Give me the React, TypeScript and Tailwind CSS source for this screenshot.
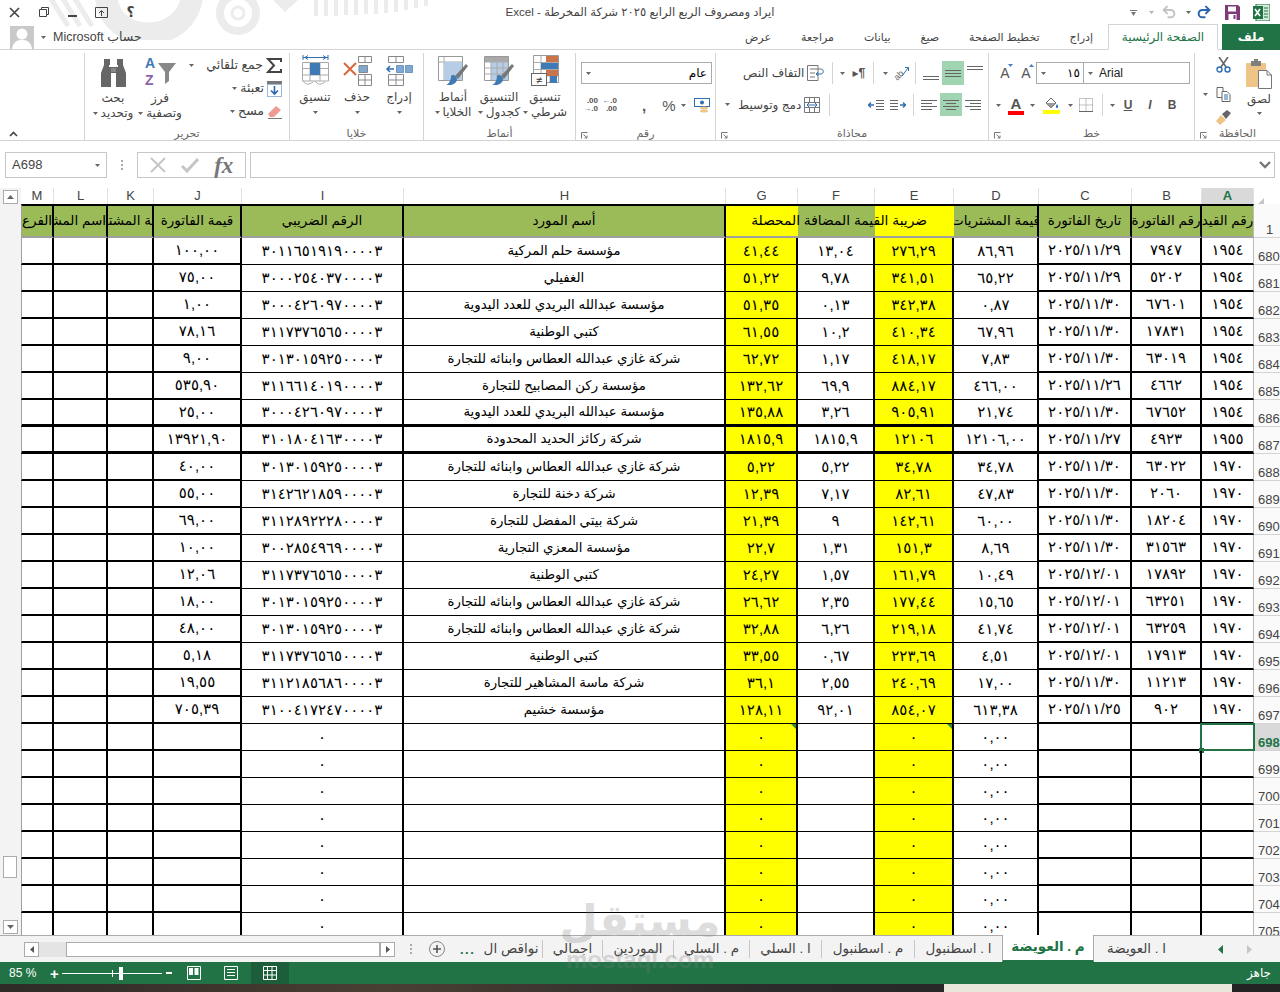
import { type ReactNode } from "react";
import { Redo2, Undo2 } from "lucide-react";

const ar = (s: string) => s.replace(/\d/g, (d) => "٠١٢٣٤٥٦٧٨٩"[Number(d)]);

const GAZI = "شركة غازي عبدالله العطاس وابنائه للتجارة";
const BARIDI = "مؤسسة عبدالله البريدي للعدد اليدوية";
const KUTBI = "كتبي الوطنية";

// A, B, C, D, E, F, G, supplier, tax number, J
const rows: [string, string, string, string, string, string, string, string, string, string][] = [
  ["1954", "7947", "2025/11/29", "86,96", "276,29", "13,04", "41,44", "مؤسسة حلم المركية", "301165191900003", "100,00"],
  ["1954", "5202", "2025/11/29", "65,22", "341,51", "9,78", "51,22", "الغفيلي", "300025403700003", "75,00"],
  ["1954", "67601", "2025/11/30", "0,87", "342,38", "0,13", "51,35", BARIDI, "300042609700003", "1,00"],
  ["1954", "17831", "2025/11/30", "67,96", "410,34", "10,2", "61,55", KUTBI, "311737656500003", "78,16"],
  ["1954", "63019", "2025/11/30", "7,83", "418,17", "1,17", "62,72", GAZI, "301301592500003", "9,00"],
  ["1954", "4662", "2025/11/26", "466,00", "884,17", "69,9", "132,62", "مؤسسة ركن المصابيح للتجارة", "311661401900003", "535,90"],
  ["1954", "67652", "2025/11/30", "21,74", "905,91", "3,26", "135,88", BARIDI, "300042609700003", "25,00"],
  ["1955", "4923", "2025/11/27", "12106,00", "12106", "1815,9", "1815,9", "شركة ركائز الحديد المحدودة", "310180416300003", "13921,90"],
  ["1970", "63022", "2025/11/30", "34,78", "34,78", "5,22", "5,22", GAZI, "301301592500003", "40,00"],
  ["1970", "2060", "2025/11/30", "47,83", "82,61", "7,17", "12,39", "شركة دخنة للتجارة", "314262185900003", "55,00"],
  ["1970", "18204", "2025/11/30", "60,00", "142,61", "9", "21,39", "شركة بيتي المفضل للتجارة", "311289222800003", "69,00"],
  ["1970", "31563", "2025/11/30", "8,69", "151,3", "1,31", "22,7", "مؤسسة المعزي التجارية", "300285496900003", "10,00"],
  ["1970", "17892", "2025/12/01", "10,49", "161,79", "1,57", "24,27", KUTBI, "311737656500003", "12,06"],
  ["1970", "63251", "2025/12/01", "15,65", "177,44", "2,35", "26,62", GAZI, "301301592500003", "18,00"],
  ["1970", "63259", "2025/12/01", "41,74", "219,18", "6,26", "32,88", GAZI, "301301592500003", "48,00"],
  ["1970", "17913", "2025/12/01", "4,51", "223,69", "0,67", "33,55", KUTBI, "311737656500003", "5,18"],
  ["1970", "11213", "2025/11/30", "17,00", "240,69", "2,55", "36,1", "شركة ماسة المشاهير للتجارة", "311218568600003", "19,55"],
  ["1970", "902", "2025/11/25", "613,38", "854,07", "92,01", "128,11", "مؤسسة خشيم", "310041724700003", "705,39"],
];

const GRID = "grid grid-cols-[33px_54px_46px_88px_162px_322px_72px_77px_79px_85px_93px_70px_52px_26px]";
const LETTERS = ["M", "L", "K", "J", "I", "H", "G", "F", "E", "D", "C", "B", "A"];

function Caret({ className = "" }: { className?: string }) {
  return (
    <svg width="5" height="3" viewBox="0 0 5 3" className={`shrink-0 ${className}`}>
      <path d="M0 0h5L2.5 3z" fill="#666" />
    </svg>
  );
}

function Launcher() {
  return (
    <svg width="7" height="7" viewBox="0 0 7 7" className="shrink-0">
      <path d="M0.5 6.5V0.5H6.5M2.5 2.5L6 6M3.5 6H6V3.5" fill="none" stroke="#777" />
    </svg>
  );
}

function Sep({ h = "h-[22px]", className = "" }: { h?: string; className?: string }) {
  return <div className={`w-px shrink-0 bg-[#d4d4d4] ${h} ${className}`} />;
}

function Group({ w, label, launcher, children }: { w: string; label: string; launcher?: boolean; children: ReactNode }) {
  return (
    <div className={`flex h-full shrink-0 flex-col border-l border-[#d4d4d4] ${w}`}>
      <div className="min-h-0 flex-1">{children}</div>
      <div className="flex h-[17px] items-end pb-[1px] pl-[5px] pr-[5px] text-[11px] leading-none text-[#666]">
        {launcher ? <Launcher /> : <span className="w-[7px]" />}
        <span dir="rtl" className="flex-1 text-center">{label}</span>
        <span className="w-[7px]" />
      </div>
    </div>
  );
}

function LargeBtn({ w, icon, lines, caret }: { w: string; icon: ReactNode; lines: string[]; caret: "inline" | "below" | "none" }) {
  return (
    <div className={`flex shrink-0 flex-col items-center ${w}`}>
      <div className="flex h-[35px] items-end justify-center pb-[2px]">{icon}</div>
      <div dir="rtl" className="mt-[2px] whitespace-nowrap text-center text-[12px] leading-[15px] text-[#444]">{lines[0]}</div>
      {caret === "below" && <Caret className="mt-[6px]" />}
      {caret !== "below" && lines[1] && (
        <div className="flex items-center gap-[3px] whitespace-nowrap text-[12px] leading-[15px] text-[#444]">
          {caret === "inline" && <Caret />}
          <span dir="rtl">{lines[1]}</span>
        </div>
      )}
    </div>
  );
}

function Paste() {
  return (
    <svg width="28" height="30" viewBox="0 0 28 30">
      <rect x="1" y="4" width="20" height="24" rx="1" fill="#eec586" />
      <rect x="6" y="2" width="10" height="5" fill="#7f7f7f" />
      <rect x="9" y="0" width="4" height="3" fill="#7f7f7f" />
      <path d="M13.5 11.5H22L26.5 16V29.5H13.5Z" fill="#fff" stroke="#777" />
      <path d="M22 11.5V16H26.5" fill="none" stroke="#777" />
    </svg>
  );
}

function ScissorsIcon() {
  return (
    <svg width="15" height="16" viewBox="0 0 15 16" fill="none">
      <path d="M3 0L10 10M12 0L5 10" stroke="#666" strokeWidth="1.6" />
      <circle cx="3.5" cy="12.5" r="2.5" stroke="#2f6fb1" strokeWidth="1.4" />
      <circle cx="11.5" cy="12.5" r="2.5" stroke="#2f6fb1" strokeWidth="1.4" />
    </svg>
  );
}

function CopyIcon() {
  return (
    <svg width="15" height="15" viewBox="0 0 15 15" fill="none">
      <path d="M1 0.5H7V10.5H1Z" fill="#fff" stroke="#666" />
      <path d="M6 4.5H11L14 7.5V14.5H6Z" fill="#fff" stroke="#666" />
      <path d="M8 8h4M8 10h4M8 12h4" stroke="#2f6fb1" />
    </svg>
  );
}

function BrushIcon() {
  return (
    <svg width="15" height="15" viewBox="0 0 15 15">
      <path d="M0 11L5 5L10 10L4 15Z" fill="#eec586" />
      <path d="M6 4L11 0L15 3L10 9Z" fill="#666" />
    </svg>
  );
}

function FontGrow({ up }: { up: boolean }) {
  return (
    <span className="relative flex w-[12px] justify-center text-[14px] leading-none text-[#555]">
      A
      <svg width="5" height="3" viewBox="0 0 5 3" className="absolute right-[-2px] top-[-2px]">
        <path d={up ? "M0 3h5L2.5 0z" : "M0 0h5L2.5 3z"} fill="#4a7ebb" />
      </svg>
    </span>
  );
}

function Lines({ ys, active }: { ys: number[]; active?: boolean }) {
  return (
    <div className={`flex h-[24px] w-[22px] shrink-0 items-center justify-center ${active ? "bg-[#a1d5b2]" : ""}`}>
      <svg width="16" height="16" viewBox="0 0 16 16">
        {ys.map((y) => (
          <path key={y} d={`M0 ${y}H16`} stroke="#666" />
        ))}
      </svg>
    </div>
  );
}

function AlignH({ kind, active }: { kind: "r" | "c" | "l"; active?: boolean }) {
  const from = kind === "l" ? 0 : kind === "c" ? 3 : 5;
  const to = kind === "l" ? 11 : kind === "c" ? 13 : 16;
  const seg = [
    [0, 16],
    [from, to],
    [0, 16],
    [from, to],
  ];
  return (
    <div className={`flex h-[23px] w-[22px] shrink-0 items-center justify-center ${active ? "bg-[#a1d5b2]" : ""}`}>
      <svg width="16" height="14" viewBox="0 0 16 14">
        {seg.map(([a, b], i) => (
          <path key={i} d={`M${a} ${2.5 + i * 3}H${b}`} stroke="#666" />
        ))}
      </svg>
    </div>
  );
}

function Indent({ flip }: { flip?: boolean }) {
  return (
    <svg width="16" height="12" viewBox="0 0 16 12" className={flip ? "-scale-x-100" : ""}>
      <path d="M8 1.5h8M8 4.5h8M8 7.5h8M8 10.5h8" stroke="#666" />
      <path d="M0 6h6M3 3.5L0.5 6L3 8.5" fill="none" stroke="#2f6fb1" strokeWidth="1.4" />
    </svg>
  );
}

function WrapIcon() {
  return (
    <svg width="17" height="16" viewBox="0 0 17 16" fill="none">
      <path d="M0.5 0.5H11V15.5H0.5Z" stroke="#777" />
      <path d="M3 4h11M3 8h5M3 12h5" stroke="#777" />
      <path d="M14 4c3 0 3 5 0 5H9M11 7l-2 2 2 2" stroke="#2f6fb1" />
    </svg>
  );
}

function MergeIcon() {
  return (
    <svg width="16" height="16" viewBox="0 0 16 16" fill="none">
      <path d="M0.5 0.5H15.5V15.5H0.5ZM0.5 5.5H15.5M0.5 10.5H15.5M5.5 0.5V5.5M10.5 0.5V5.5M5.5 10.5V15.5M10.5 10.5V15.5" stroke="#777" />
      <path d="M3 8h10M5 6L3 8l2 2M11 6l2 2-2 2" stroke="#2f6fb1" />
    </svg>
  );
}

function TableGlyph({ kind }: { kind: "cond" | "table" | "cell" }) {
  if (kind === "cond") {
    return (
      <svg width="29" height="31" viewBox="0 0 29 31">
        <path d="M2.5 0.5H27.5V27.5H2.5Z" fill="#fff" stroke="#999" />
        <path d="M10 0.5V27M19 0.5V27M2.5 7.5H27.5M2.5 14.5H27.5M2.5 21H27.5" stroke="#aaa" />
        <rect x="15" y="1" width="12" height="6" fill="#c9744b" />
        <rect x="10" y="8" width="17" height="6" fill="#3e7ab5" />
        <rect x="15" y="15" width="12" height="6" fill="#c9744b" />
        <rect x="19" y="21" width="7" height="7" fill="#3e7ab5" />
        <rect x="0.5" y="18.5" width="15" height="12" fill="#fff" stroke="#666" />
        <text x="8" y="28.5" textAnchor="middle" fontSize="11" fill="#333">≠</text>
      </svg>
    );
  }
  return (
    <svg width="30" height="30" viewBox="0 0 30 30">
      <path d="M0.5 0.5H24.5V24.5H0.5Z" fill="#fff" stroke="#999" />
      {kind === "table" ? (
        <>
          <rect x="1" y="1" width="23" height="5" fill="#a9a9a9" />
          <rect x="7" y="6" width="17" height="18" fill="#b7cde6" />
          <path d="M7 1V24M13 1V24M19 1V24M1 6H24M1 12H24M1 18H24" stroke="#aaa" />
        </>
      ) : (
        <>
          <path d="M6 1V24M1 6H24" stroke="#aaa" />
          <rect x="6" y="6" width="18" height="18" fill="#b7cde6" />
        </>
      )}
      <path d="M17 20L28 8L30 10L20 23Z" fill="#777" />
      <path d="M13 22C12 17 19 19 19 24C17 30 10 29 8 29C11 28 12 25 13 22Z" fill="#3e7ab5" />
    </svg>
  );
}

function CellGlyph({ kind }: { kind: "insert" | "delete" | "format" }) {
  if (kind === "format") {
    return (
      <svg width="29" height="32" viewBox="0 0 29 32" fill="none">
        <path d="M2 3.5H27M2 1v5M27 1v5M4 3.5l3-2M4 3.5l3 2M25 3.5l-3-2M25 3.5l-3 2" stroke="#2f6fb1" />
        <path d="M1.5 8.5H27.5V27H1.5ZM1.5 14.5H27.5M1.5 21H27.5M9 8.5V27M19 8.5V27" stroke="#aaa" />
        <rect x="9" y="9" width="10" height="12" fill="#3e7ab5" />
        <path d="M2 27c3 4 6 4 10 1M14 27c3 4 6 4 10 1" stroke="#aaa" />
      </svg>
    );
  }
  const del = kind === "delete";
  return (
    <svg width="29" height="30" viewBox="0 0 29 30" fill="none">
      <path d={del ? "M15.5 0.5H28.5V6.5H15.5ZM22 0.5V6.5" : "M3.5 0.5H18.5V6.5H3.5ZM11 0.5V6.5"} stroke="#888" />
      <path d={del ? "M15.5 18.5H28.5V29.5H15.5ZM22 18.5V29.5M15.5 24H28.5" : "M3.5 18.5H18.5V29.5H3.5ZM11 18.5V29.5M3.5 24H18.5"} stroke="#888" />
      {del ? (
        <>
          <path d="M16 9.5H24.5V16.5H16Z" fill="#7fa9d3" stroke="#888" />
          <path d="M1 7l12 12M13 7L1 19" stroke="#d9663c" strokeWidth="2" />
        </>
      ) : (
        <>
          <path d="M11.5 9.5H18.5V16.5H11.5ZM20.5 9.5H27.5V16.5H20.5Z" fill="#7fa9d3" stroke="#6f96bd" />
          <path d="M2 13H9M5 10L2 13l3 3" stroke="#2f6fb1" strokeWidth="1.5" />
        </>
      )}
    </svg>
  );
}

function Cell({ children, className = "" }: { children?: ReactNode; className?: string }) {
  return (
    <div dir="rtl" className={`relative flex items-center justify-center overflow-hidden whitespace-nowrap text-black ${className}`}>
      {children}
    </div>
  );
}

function Tri() {
  return <span className="absolute right-0 top-0 h-0 w-0 border-l-[5px] border-t-[5px] border-l-transparent border-t-[#2f8b3d]" />;
}

function SheetRow({ n, data }: { n: number; data?: (typeof rows)[number] }) {
  const heavy = n === 686 || n === 687;
  const thick = heavy ? "border-b-[3px] border-black" : "border-b-2 border-black";
  const thin = heavy ? "border-b-[3px] border-black" : "border-b border-black";
  const side = "border-r-2 border-r-black";
  const num = "text-[15px]";
  const selected = n === 698;
  const d = data;
  return (
    <div className={`${GRID} h-[27px]`}>
      <Cell className={`${thick} ${side} border-l border-l-[#9f9f9f]`} />
      <Cell className={`${thick} ${side}`} />
      <Cell className={`${thick} ${side}`} />
      <Cell className={`${thick} ${side} ${num}`}>{d && ar(d[9])}</Cell>
      <Cell className={`${thin} ${side} ${num}`}>{d ? ar(d[8]) : "٠"}</Cell>
      <Cell className={`${thin} ${side} text-[13.3px]`}>{d && d[7]}</Cell>
      <Cell className={`${thin} ${side} ${num} bg-[#ffff00]`}>
        {d ? ar(d[6]) : "٠"}
        {selected && <Tri />}
      </Cell>
      <Cell className={`${thin} ${side} ${num}`}>{d && ar(d[5])}</Cell>
      <Cell className={`${thin} ${side} ${num} bg-[#ffff00]`}>
        {d ? ar(d[4]) : "٠"}
        {selected && <Tri />}
      </Cell>
      <Cell className={`${thin} ${side} ${num}`}>{d ? ar(d[3]) : "٠,٠٠"}</Cell>
      <Cell className={`${thick} ${side} ${num}`}>{d && ar(d[2])}</Cell>
      <Cell className={`${thick} ${side} ${num}`}>{d && ar(d[1])}</Cell>
      <div className={`relative flex items-center justify-center whitespace-nowrap text-black ${num} ${thick} border-r border-r-[#bbb]`} dir="rtl">
        {d && ar(d[0])}
        {selected && (
          <>
            <span className="absolute inset-x-[-2px] bottom-[-2px] top-[-1px] border-2 border-[#217346]" />
            <span className="absolute bottom-[-4px] left-[-3px] h-[5px] w-[5px] bg-[#217346]" />
          </>
        )}
      </div>
      <div className={`flex items-end overflow-hidden border-b border-[#d4d4d4] pl-[4px] text-[13px] leading-[14px] ${selected ? "bg-[#d9d9d9] font-bold text-[#217346]" : "bg-[#fafafa] text-[#444]"}`}>
        {n}
      </div>
    </div>
  );
}

function HeaderCell({ text, className = "", start }: { text?: string; className?: string; start?: boolean }) {
  return (
    <div dir="rtl" className={`flex min-w-0 items-center overflow-hidden whitespace-nowrap border-b-2 border-t-2 border-b-[#9f9f9f] border-t-black text-[13.5px] text-black ${start ? "justify-start" : "justify-center"} ${className}`}>
      {text}
    </div>
  );
}

const sheetTabs: [string, string][] = [
  ["ا . العويضة", "w-[85px]"],
  ["م . العويضة", "w-[92px]"],
  ["ا . اسطنبول", "w-[88px]"],
  ["م . اسطنبول", "w-[93px]"],
  ["ا . السلي", "w-[72px]"],
  ["م . السلي", "w-[76px]"],
  ["الموردين", "w-[71px]"],
  ["اجمالي", "w-[60px]"],
  ["نواقص ال", "w-[62px]"],
];

export default function App() {
  const blank = [698, 699, 700, 701, 702, 703, 704, 705];

  return (
    <div className="relative flex h-[992px] w-[1280px] flex-col overflow-hidden bg-white [font-family:'Liberation_Sans','DejaVu_Sans',sans-serif]">
      {/* office background pattern behind the title */}
      <svg width="470" height="40" viewBox="0 0 470 40" className="absolute left-0 top-0" fill="none">
        <g stroke="#ececec">
          <path d="M48 -6L68 26M60 -6L80 26M72 -6L92 26" strokeWidth="5" />
          <path d="M106 -4C110 46 186 46 192 -4" strokeWidth="22" />
          <circle cx="238" cy="13" r="18" strokeWidth="8" />
          <circle cx="238" cy="13" r="6" strokeWidth="3" />
          <path d="M316 0V16M326 0V16M336 0V16M346 0V15M356 0V15M366 0V14M376 0V14M386 0V13M396 0V12M406 0V10M416 0V8M426 0V6" strokeWidth="4" />
        </g>
        <path d="M273 0H298L285 12Z" fill="#ececec" />
      </svg>

      {/* title bar */}
      <div className="relative flex h-[24px] shrink-0 items-center">
        <div className="flex w-[180px] items-center text-[#444]">
          <span className="flex w-[29px] justify-center">
            <svg width="11" height="11" viewBox="0 0 11 11"><path d="M1 1l9 9M10 1l-9 9" stroke="#444" strokeWidth="1.6" /></svg>
          </span>
          <span className="flex w-[29px] justify-center">
            <svg width="10" height="10" viewBox="0 0 10 10" fill="none"><path d="M2.5 2.5V0.5H9.5V7.5H7.5M0.5 2.5H7.5V9.5H0.5Z" stroke="#444" /></svg>
          </span>
          <span className="flex w-[29px] justify-center">
            <span className="mt-[7px] h-[2px] w-[9px] bg-[#444]" />
          </span>
          <span className="flex w-[29px] justify-center">
            <svg width="13" height="11" viewBox="0 0 13 11" fill="none"><path d="M0.5 0.5H12.5V10.5H0.5ZM6.5 9V4M4 6l2.5-2.5L9 6" stroke="#444" /></svg>
          </span>
          <span className="flex w-[29px] justify-center text-[14px] font-bold leading-none">؟</span>
        </div>
        <div dir="rtl" className="flex-1 text-center text-[11.6px] text-[#444]">
          ايراد ومصروف الربع الرابع ٢٠٢٥ شركة المخرطة - Excel
        </div>
        <div className="flex w-[180px] items-center justify-end pr-[10px]">
          <svg width="7" height="7" viewBox="0 0 7 7" className="mr-[12px]"><path d="M1 3h5L3.5 7z" fill="#777" /><path d="M0 1.5h7" stroke="#777" /></svg>
          <Caret className="mr-[7px] opacity-50" />
          <Undo2 size={16} strokeWidth={3} color="#c4c4c4" className="mr-[9px]" />
          <Caret className="mr-[5px]" />
          <Redo2 size={16} strokeWidth={3} color="#2b66ad" className="mr-[13px]" />
          <svg width="15" height="15" viewBox="0 0 15 15" className="mr-[13px]">
            <path d="M0 0H13L15 2V15H0Z" fill="#80397b" />
            <rect x="3" y="1.5" width="8" height="5" fill="#fff" />
            <rect x="3.5" y="9" width="8" height="6" fill="#fff" />
            <rect x="8.5" y="10" width="2" height="4" fill="#80397b" />
          </svg>
          <svg width="17" height="17" viewBox="0 0 17 17">
            <rect x="3" y="0" width="14" height="17" fill="#d6e9dc" stroke="#217346" />
            <rect x="0" y="2" width="10" height="13" fill="#217346" />
            <path d="M2 5l5 7M7 5l-5 7" stroke="#fff" strokeWidth="1.6" />
            <path d="M11 4h4M11 7h4M11 10h4M11 13h4" stroke="#217346" />
          </svg>
        </div>
      </div>

      {/* tabs row */}
      <div className="relative flex h-[26px] shrink-0 items-end justify-between">
        <div className="flex h-full items-center pl-[10px]">
          <svg width="24" height="23" viewBox="0 0 24 23">
            <rect width="24" height="23" fill="#c9c9c9" />
            <circle cx="12" cy="8" r="5.5" fill="#fff" />
            <path d="M2 23C3 15 8 14 12 14C16 14 21 15 22 23Z" fill="#fff" />
          </svg>
          <Caret className="ml-[7px]" />
          <span dir="rtl" className="ml-[7px] text-[12.5px] text-[#444]">حساب Microsoft</span>
        </div>
        <div className="absolute inset-x-0 bottom-0 h-px bg-[#d4d4d4]" />
        <div dir="rtl" className="relative flex h-full items-stretch text-[11px] text-[#444]">
          <div className="flex w-[58px] items-center justify-center bg-[#217346] text-[12px] font-bold text-white">ملف</div>
          <div className="mr-[4px] flex w-[110px] items-center justify-center border border-[#d4d4d4] border-b-white text-[12px] text-[#217346]">الصفحة الرئيسية</div>
          {["إدراج", "تخطيط الصفحة", "صيغ", "بيانات", "مراجعة", "عرض"].map((t) => (
            <div key={t} className="flex items-center px-[15px]">{t}</div>
          ))}
        </div>
      </div>

      {/* ribbon */}
      <div className="flex h-[91px] shrink-0 border-b border-[#d4d4d4] pt-[3px]">
        <div className="flex h-full w-[84px] shrink-0 items-end pb-[3px] pl-[9px]">
          <svg width="9" height="6" viewBox="0 0 9 6" fill="none"><path d="M1 5l3.5-3.5L8 5" stroke="#444" strokeWidth="1.6" /></svg>
        </div>

        <Group w="w-[205px]" label="تحرير">
          <div className="flex pl-[6px] pt-[1px]">
            <LargeBtn w="w-[44px]" caret="inline" lines={["بحث", "وتحديد"]} icon={
              <svg width="27" height="28" viewBox="0 0 27 28">
                <path d="M4 0h6v6h-1v2h9V6h-1V0h6v6l3 8v14H16V14h-5v14H1V14l3-8z" fill="#666" />
                <path d="M11 9h5v4h-5z" fill="#888" />
              </svg>
            } />
            <LargeBtn w="w-[50px]" caret="inline" lines={["فرز", "وتصفية"]} icon={
              <svg width="31" height="31" viewBox="0 0 31 31">
                <text x="0" y="12" fontSize="14" fontWeight="bold" fill="#3e7ab5" fontFamily="Liberation Sans">A</text>
                <text x="0" y="29" fontSize="14" fontWeight="bold" fill="#8a62a8" fontFamily="Liberation Sans">Z</text>
                <path d="M13 7H31L24 16V25L20 28V16Z" fill="#888" />
              </svg>
            } />
            <div className="flex flex-1 flex-col items-end gap-[6px] pr-[7px] pt-[3px] text-[12.5px] leading-[15px] text-[#444]">
              <div className="flex h-[17px] items-center gap-[3px]">
                <Caret className="mr-[9px]" />
                <span dir="rtl">جمع تلقائي</span>
                <svg width="16" height="15" viewBox="0 0 16 15" fill="none"><path d="M15 4V1H2L8 7.5L2 14H15V11" stroke="#444" strokeWidth="2" /></svg>
              </div>
              <div className="flex h-[17px] items-center gap-[3px]">
                <Caret />
                <span dir="rtl">تعبئة</span>
                <svg width="15" height="16" viewBox="0 0 15 16"><rect width="15" height="3" fill="#777" /><rect x="0.5" y="3.5" width="14" height="12" fill="#fff" stroke="#9cb8d6" /><path d="M7.5 5V13M4 9.5l3.5 3.5L11 9.5" fill="none" stroke="#2b66ad" strokeWidth="1.6" /></svg>
              </div>
              <div className="flex h-[17px] items-center gap-[3px]">
                <Caret />
                <span dir="rtl">مسح</span>
                <svg width="15" height="14" viewBox="0 0 15 14"><path d="M1 9L9 1L14 5L7 12H3Z" fill="#ec9c91" /><path d="M1 13.5H15" stroke="#777" /></svg>
              </div>
            </div>
          </div>
        </Group>

        <Group w="w-[134px]" label="خلايا">
          <div className="flex pl-[4px]">
            <LargeBtn w="w-[42px]" caret="below" lines={["تنسيق"]} icon={<CellGlyph kind="format" />} />
            <LargeBtn w="w-[42px]" caret="below" lines={["حذف"]} icon={<CellGlyph kind="delete" />} />
            <LargeBtn w="w-[42px]" caret="below" lines={["إدراج"]} icon={<CellGlyph kind="insert" />} />
          </div>
        </Group>

        <Group w="w-[152px]" label="أنماط">
          <div className="flex pl-[6px]">
            <LargeBtn w="w-[46px]" caret="inline" lines={["أنماط", "الخلايا"]} icon={<TableGlyph kind="cell" />} />
            <LargeBtn w="w-[46px]" caret="inline" lines={["التنسيق", "كجدول"]} icon={<TableGlyph kind="table" />} />
            <LargeBtn w="w-[46px]" caret="inline" lines={["تنسيق", "شرطي"]} icon={<TableGlyph kind="cond" />} />
          </div>
        </Group>

        <Group w="w-[140px]" label="رقم" launcher>
          <div className="flex flex-col px-[5px] pt-[9px]">
            <div className="flex h-[22px] w-[131px] items-center justify-between border border-[#ababab] px-[4px]">
              <Caret />
              <span className="text-[12px] text-black">عام</span>
            </div>
            <div className="mt-[10px] flex h-[22px] items-center text-[#555]">
              <span className="ml-[2px] flex w-[15px] flex-col text-[8px] font-bold leading-[8px] text-[#555]">
                <span className="text-right">.00</span>
                <span className="text-right"><span className="text-[#2b66ad]">→</span>.0</span>
              </span>
              <span className="ml-[4px] flex w-[15px] flex-col text-[8px] font-bold leading-[8px] text-[#555]">
                <span className="text-right"><span className="text-[#2b66ad]">←</span>.0</span>
                <span className="text-right">.00</span>
              </span>
              <span className="ml-[25px] text-[15px] font-bold leading-none">,</span>
              <span className="ml-[16px] text-[15px] leading-none">%</span>
              <Caret className="ml-[5px]" />
              <svg width="16" height="16" viewBox="0 0 16 16" className="ml-[8px]">
                <rect x="0.5" y="1.5" width="15" height="8" fill="#fff" stroke="#2f6fb1" />
                <circle cx="8" cy="5.5" r="2" fill="#2f6fb1" />
                <ellipse cx="10" cy="11" rx="4" ry="1.6" fill="#eec586" />
                <ellipse cx="10" cy="14" rx="4" ry="1.6" fill="#eec586" />
              </svg>
            </div>
          </div>
        </Group>

        <Group w="w-[273px]" label="محاذاة" launcher>
          <div className="flex flex-col pt-[8px]">
            <div className="flex h-[24px] items-center">
              <span dir="rtl" className="ml-[27px] text-[12px] text-[#444]">التفاف النص</span>
              <span className="ml-[3px]"><WrapIcon /></span>
              <Sep className="ml-[8px]" />
              <Caret className="ml-[7px]" />
              <span className="ml-[7px] flex w-[14px] items-center text-[12px] font-bold leading-none text-[#555]">▸¶</span>
              <Sep className="ml-[7px]" />
              <Caret className="ml-[9px]" />
              <svg width="16" height="16" viewBox="0 0 16 16" className="ml-[5px]" fill="none">
                <text x="1" y="14" fontSize="9" fill="#666" transform="rotate(-45 5 11)" fontFamily="Liberation Sans">ab</text>
                <path d="M9 11L15 3M12 2.5h3.5V6" stroke="#2f6fb1" />
              </svg>
              <Sep className="ml-[6px]" />
              <span className="ml-[4px]"><Lines ys={[11.5, 14.5]} /></span>
              <Lines active ys={[5.5, 8.5, 11.5]} />
              <Lines ys={[1.5, 4.5]} />
            </div>
            <div className="mt-[8px] flex h-[23px] items-center">
              <Caret className="ml-[9px]" />
              <span dir="rtl" className="ml-[8px] text-[12px] text-[#444]">دمج وتوسيط</span>
              <span className="ml-[3px]"><MergeIcon /></span>
              <Sep className="ml-[9px]" />
              <span className="ml-[38px]"><Indent /></span>
              <span className="ml-[6px]"><Indent flip /></span>
              <Sep className="ml-[7px]" />
              <span className="ml-[4px]"><AlignH kind="l" /></span>
              <AlignH kind="c" active />
              <AlignH kind="r" />
            </div>
          </div>
        </Group>

        <Group w="w-[206px]" label="خط" launcher>
          <div className="flex flex-col pt-[9px]">
            <div className="flex h-[22px] items-center">
              <span className="ml-[10px]"><FontGrow up={false} /></span>
              <span className="ml-[9px]"><FontGrow up /></span>
              <div className="ml-[4px] flex h-[22px] w-[154px] border border-[#ababab]">
                <div className="flex w-[47px] items-center justify-between border-r border-[#ababab] pl-[4px] pr-[3px]">
                  <Caret />
                  <span className="text-[12px] text-black">١٥</span>
                </div>
                <div className="flex flex-1 items-center pl-[4px] text-[12px] text-[#222]">
                  <Caret className="mr-[6px]" />
                  Arial
                </div>
              </div>
            </div>
            <div className="mt-[10px] flex h-[22px] items-center">
              <Caret className="ml-[7px]" />
              <span className="ml-[7px] flex w-[16px] flex-col items-center text-[15px] font-bold leading-[15px] text-[#555]">A<span className="h-[4px] w-[16px] bg-[#ff0000]" /></span>
              <Caret className="ml-[6px]" />
              <svg width="17" height="18" viewBox="0 0 17 18" className="ml-[8px]">
                <path d="M3 7L8 2L13 7L8 12Z" fill="#fff" stroke="#666" />
                <path d="M3 7L13 7L8 12Z" fill="#999" />
                <path d="M14 8c1.5 2 1.5 4 0 4s-1.5-2 0-4z" fill="#2f6fb1" />
                <rect y="14" width="17" height="4" fill="#ffff00" />
              </svg>
              <Caret className="ml-[8px]" />
              <svg width="14" height="14" viewBox="0 0 14 14" className="ml-[6px]" fill="none">
                <path d="M0.5 0.5H13.5V13.5H0.5ZM7 0.5V13.5M0.5 7H13.5" stroke="#8a8a8a" strokeDasharray="1 1" />
                <path d="M0 13.5H14" stroke="#666" />
              </svg>
              <Sep className="ml-[9px]" />
              <Caret className="ml-[7px]" />
              <span className="ml-[8px] w-[10px] text-center text-[12px] font-bold leading-none text-[#555] underline">U</span>
              <span className="ml-[12px] w-[10px] text-center text-[12px] font-bold italic leading-none text-[#555]">I</span>
              <span className="ml-[12px] w-[10px] text-center text-[12px] font-bold leading-none text-[#555]">B</span>
            </div>
          </div>
        </Group>

        <Group w="w-[86px]" label="الحافظة" launcher>
          <div className="flex pt-[4px]">
            <div className="flex w-[40px] flex-col pl-[8px]">
              <div className="flex h-[25px] items-start justify-end pr-[4px]"><ScissorsIcon /></div>
              <div className="flex h-[24px] items-center justify-between pr-[4px]">
                <Caret />
                <CopyIcon />
              </div>
              <div className="flex h-[22px] items-center justify-end pr-[4px]"><BrushIcon /></div>
            </div>
            <div className="flex flex-1 flex-col items-center pl-[3px] pt-[2px]">
              <Paste />
              <span className="mt-[3px] text-[12px] leading-[15px] text-[#444]">لصق</span>
              <Caret className="mt-[5px]" />
            </div>
          </div>
        </Group>
      </div>

      {/* formula bar */}
      <div className="flex h-[47px] shrink-0 items-start pl-[5px] pt-[11px]">
        <div className="flex h-[26px] w-[102px] items-center justify-between border border-[#c6c6c6] pl-[6px] pr-[6px] text-[13px] text-[#444]">
          A698
          <Caret />
        </div>
        <div className="flex h-[26px] w-[30px] flex-col items-center justify-center gap-[2px]">
          <span className="h-[2px] w-[2px] bg-[#aaa]" />
          <span className="h-[2px] w-[2px] bg-[#aaa]" />
          <span className="h-[2px] w-[2px] bg-[#aaa]" />
        </div>
        <div className="flex h-[26px] w-[109px] items-center justify-around border border-[#c6c6c6] px-[4px]">
          <svg width="16" height="16" viewBox="0 0 16 16"><path d="M1 1l14 14M15 1L1 15" stroke="#c6c6c6" strokeWidth="2" /></svg>
          <svg width="18" height="15" viewBox="0 0 18 15" fill="none"><path d="M1 8l5 5L17 1" stroke="#c6c6c6" strokeWidth="3" /></svg>
          <span className="font-['Liberation_Serif',serif] text-[23px] font-bold italic leading-none text-[#777]">fx</span>
        </div>
        <div className="ml-[4px] flex h-[26px] w-[1025px] items-center justify-end border border-[#c6c6c6] pr-[3px]">
          <svg width="12" height="8" viewBox="0 0 12 8" fill="none"><path d="M1 1l5 5 5-5" stroke="#777" strokeWidth="2.4" /></svg>
        </div>
      </div>

      {/* sheet */}
      <div className="flex h-[747px] shrink-0 overflow-hidden">
        <div className="flex w-[21px] shrink-0 flex-col bg-[#f3f3f3] pl-[3px] pt-[2px]">
          <div className="flex h-[14px] w-[15px] items-center justify-center border border-[#ababab] bg-white">
            <svg width="7" height="4" viewBox="0 0 7 4"><path d="M0 4h7L3.5 0z" fill="#666" /></svg>
          </div>
          <div className="mt-[652px] h-[22px] w-[14px] border border-[#ababab] bg-white" />
          <div className="mt-[42px] flex h-[14px] w-[15px] items-center justify-center border border-[#ababab] bg-white">
            <svg width="7" height="4" viewBox="0 0 7 4"><path d="M0 0h7L3.5 4z" fill="#666" /></svg>
          </div>
        </div>
        <div className="min-w-0 flex-1">
          <div className={`${GRID} h-[16px] text-[13px] leading-[16px] text-[#444]`}>
            {LETTERS.map((l) => (
              <div key={l} className={`border-r border-[#e1e1e1] text-center ${l === "A" ? "border-b-2 border-b-[#217346] bg-[#d9d9d9] font-bold text-[#217346]" : ""}`}>
                {l}
              </div>
            ))}
            <div className="flex items-end pb-[1px] pl-[3px]">
              <span className="h-0 w-0 border-b-[7px] border-l-[7px] border-b-[#c6c6c6] border-l-transparent" />
            </div>
          </div>
          <div className={`${GRID} h-[34px]`}>
            <HeaderCell text="الفرع" className="border-l border-r-2 border-l-[#9f9f9f] border-r-black bg-[#9bbb59]" />
            <HeaderCell text="اسم المشتري" start className="border-r-2 border-r-black bg-[#9bbb59]" />
            <HeaderCell text="هوية المشتري" className="border-r-2 border-r-black bg-[#9bbb59]" />
            <HeaderCell text="قيمة الفاتورة" className="border-r-2 border-r-black bg-[#9bbb59]" />
            <HeaderCell text="الرقم الضريبي" className="border-r-2 border-r-black bg-[#9bbb59]" />
            <HeaderCell text="أسم المورد" className="border-r-2 border-r-black bg-[#9bbb59]" />
            <HeaderCell className="bg-[#ffff00]" />
            <HeaderCell className="bg-[#9bbb59]" />
            <div dir="rtl" className="relative z-10 flex min-w-0 items-center whitespace-nowrap border-b-2 border-t-2 border-b-[#9f9f9f] border-t-black bg-[#ffff00] pr-[27px] text-[13.8px] text-black">
              ضريبة القيمة المضافة المحصلة
            </div>
            <HeaderCell text="قيمة المشتريات" className="border-r-2 border-r-black bg-[#9bbb59]" />
            <HeaderCell text="تاريخ الفاتورة" className="border-r-2 border-r-black bg-[#9bbb59]" />
            <HeaderCell text="رقم الفاتورة" className="border-r-2 border-r-black bg-[#9bbb59]" />
            <HeaderCell text="رقم القيد" className="border-r border-r-[#bbb] bg-[#9bbb59]" />
            <div className="flex items-end border-b border-[#d4d4d4] bg-[#fafafa] pl-[12px] text-[13px] leading-[14px] text-[#444]">1</div>
          </div>
          {rows.map((r, i) => (
            <SheetRow key={680 + i} n={680 + i} data={r} />
          ))}
          {blank.map((n) => (
            <SheetRow key={n} n={n} />
          ))}
        </div>
      </div>

      {/* sheet tabs */}
      <div className="flex h-[27px] shrink-0 items-stretch border-t border-[#ababab] bg-[#f3f3f3]">
        <div className="flex items-center pl-[24px]">
          <div className="flex h-[15px] w-[15px] items-center justify-center border border-[#ababab] bg-white">
            <svg width="4" height="7" viewBox="0 0 4 7"><path d="M4 0v7L0 3.5z" fill="#555" /></svg>
          </div>
          <div className="h-[15px] w-[27px] bg-[#e4e4e4]" />
          <div className="h-[15px] w-[314px] border border-[#ababab] bg-white" />
          <div className="flex h-[15px] w-[15px] items-center justify-center border border-[#ababab] bg-white">
            <svg width="4" height="7" viewBox="0 0 4 7"><path d="M0 0v7L4 3.5z" fill="#555" /></svg>
          </div>
          <div className="ml-[15px] flex flex-col gap-[2px]">
            <span className="h-[2px] w-[2px] bg-[#aaa]" />
            <span className="h-[2px] w-[2px] bg-[#aaa]" />
            <span className="h-[2px] w-[2px] bg-[#aaa]" />
          </div>
          <svg width="18" height="18" viewBox="0 0 18 18" className="ml-[16px]" fill="none">
            <circle cx="9" cy="9" r="7.5" stroke="#888" />
            <path d="M5 9h8M9 5v8" stroke="#555" strokeWidth="1.6" />
          </svg>
          <span className="ml-[14px] text-[13px] font-bold leading-none tracking-[1.5px] text-[#217346]">...</span>
        </div>
        <div dir="rtl" className="ml-auto flex items-stretch text-[13.5px] text-[#444]">
          <div className="flex w-[101px] items-center pr-[28px]">
            <svg width="5" height="9" viewBox="0 0 5 9"><path d="M0 0v9L5 4.5z" fill="#c6c6c6" /></svg>
            <svg width="5" height="9" viewBox="0 0 5 9" className="mr-[24px]"><path d="M5 0v9L0 4.5z" fill="#217346" /></svg>
          </div>
          {sheetTabs.map(([t, w], i) => (
            <div
              key={t}
              className={`flex items-center justify-center whitespace-nowrap ${w} ${i === 1 ? "mt-[-1px] border-x border-b-2 border-x-[#ababab] border-b-[#217346] bg-white font-bold text-[#217346]" : ""}`}
            >
              <span className={`flex h-[18px] w-full items-center justify-center ${i >= 2 && i < 8 ? "border-l border-[#c6c6c6]" : ""}`}>{t}</span>
            </div>
          ))}
        </div>
      </div>

      {/* status bar */}
      <div className="flex h-[22px] shrink-0 items-center bg-[#217346] text-[12px] text-white">
        <span className="ml-[9px] w-[27px] whitespace-nowrap">85 %</span>
        <span className="ml-[14px] text-[15px] font-bold leading-none">+</span>
        <div className="relative ml-[3px] h-px w-[100px] bg-white">
          <span className="absolute left-[50px] top-[-3px] h-[7px] w-px bg-white" />
          <span className="absolute left-[57px] top-[-6px] h-[13px] w-[4px] bg-white" />
        </div>
        <span className="ml-[4px] h-[2px] w-[6px] bg-white" />
        <svg width="14" height="14" viewBox="0 0 14 14" className="ml-[15px]" fill="none">
          <path d="M0.5 0.5H13.5V13.5H0.5Z" stroke="#fff" />
          <path d="M2 2h4v7H2zM7.5 2h4v7h-4z" fill="#fff" />
        </svg>
        <svg width="14" height="14" viewBox="0 0 14 14" className="ml-[23px]" fill="none">
          <path d="M0.5 0.5H13.5V13.5H0.5ZM3 3.5H11M3 6.5H11M3 9.5H11" stroke="#fff" />
        </svg>
        <div className="ml-[13px] flex h-full w-[38px] items-center justify-center bg-[#1b5e39]">
          <svg width="14" height="14" viewBox="0 0 14 14" fill="none">
            <path d="M0.5 0.5H13.5V13.5H0.5ZM0.5 4.5H13.5M0.5 9H13.5M4.5 0.5V13.5M9 0.5V13.5" stroke="#fff" />
          </svg>
        </div>
        <span className="ml-auto mr-[9px]">جاهز</span>
      </div>

      {/* desktop behind the window */}
      <div className="flex h-[8px] shrink-0 bg-[linear-gradient(90deg,#2e2a26,#4a3f33_30%,#2b2b2b_60%,#222)]">
        <div className="ml-[944px] w-[288px] bg-[#e9e6dc]" />
      </div>

      {/* mostaql watermark */}
      <div className="pointer-events-none absolute left-[558px] top-[894px] flex w-[164px] flex-col items-center text-[#7c7c7c] opacity-25">
        <span className="text-[44px] font-bold leading-[54px]">مستقل</span>
        <span className="text-[24px] font-bold leading-[24px]">mostaql.com</span>
      </div>
    </div>
  );
}
